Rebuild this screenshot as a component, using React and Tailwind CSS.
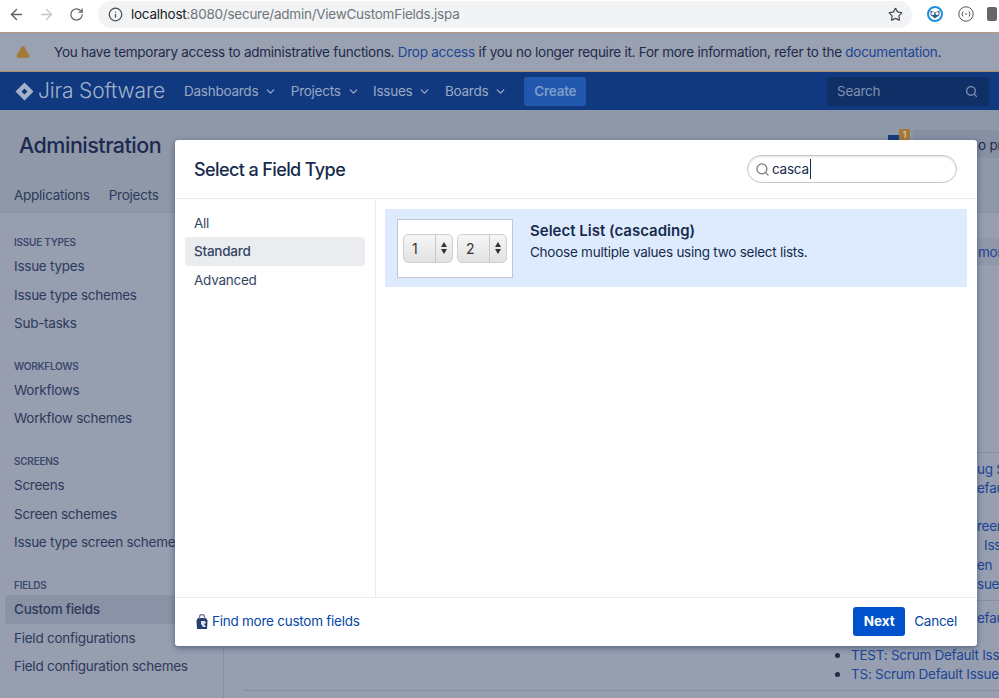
import React from "react";
import { ArrowLeft, ArrowRight, RotateCw, Info, Star, Search, ChevronDown, TriangleAlert } from "lucide-react";

const sidebar = [
  { title: "ISSUE TYPES", items: ["Issue types", "Issue type schemes", "Sub-tasks"] },
  { title: "WORKFLOWS", items: ["Workflows", "Workflow schemes"] },
  { title: "SCREENS", items: ["Screens", "Screen schemes", "Issue type screen schemes"] },
  { title: "FIELDS", items: ["Custom fields", "Field configurations", "Field configuration schemes"] },
];

const peekLinks = [
  { top: "top-[459px]", text: "ug S" },
  { top: "top-[478px]", text: "efau" },
  { top: "top-[516px]", text: "reen" },
  { top: "top-[535px]", text: "  Iss" },
  { top: "top-[555px]", text: "en" },
  { top: "top-[574px]", text: "sue" },
  { top: "top-[608px]", text: "efau" },
];

const NavItem = ({ label }) => (
  <div className="flex items-center gap-[6px] text-[#9aa8c4]">
    {label}
    <ChevronDown size={13} strokeWidth={2.5} />
  </div>
);

const FakeSelect = ({ value }) => (
  <div className="flex h-[29px] w-[50px] rounded-[5px] border border-[#cfcfcf] bg-gradient-to-b from-[#f6f6f6] to-[#e2e2e2] text-[#333]">
    <div className="flex-1 pl-[8px] text-[14px] leading-[27px]">{value}</div>
    <div className="flex w-[17px] flex-col items-center justify-center gap-[2px] border-l border-[#c8c8c8]">
      <div className="h-0 w-0 border-x-[3.5px] border-b-[5px] border-x-transparent border-b-[#333]"></div>
      <div className="h-0 w-0 border-x-[3.5px] border-t-[5px] border-x-transparent border-t-[#333]"></div>
    </div>
  </div>
);

export default function App() {
  return (
    <div className="relative h-[698px] w-[999px] overflow-hidden bg-[#969eb0] font-['Inter','Liberation_Sans',sans-serif] text-[13.5px] tracking-[-0.25px]">
      {/* browser bar */}
      <div className="flex h-[33px] items-center border-b border-[#b09a78] bg-white pb-[4px]">
        <ArrowLeft size={17} className="ml-[8px] text-[#5f6368]" />
        <ArrowRight size={17} className="ml-[13px] text-[#c4c6c9]" />
        <RotateCw size={15} className="ml-[14px] text-[#5f6368]" />
        <div className="ml-[14px] flex h-[27px] w-[814px] items-center rounded-full bg-[#f1f3f4] pl-[10px] pr-[9px]">
          <Info size={15} className="text-[#4a4d50]" />
          <span className="ml-[8px] text-[#202124]">localhost</span>
          <span className="text-[#70757a]">:8080/secure/admin/ViewCustomFields.jspa</span>
          <Star size={15} className="ml-auto text-[#4a4d50]" />
        </div>
        <svg width="18" height="18" viewBox="0 0 18 18" className="ml-[14px] shrink-0">
          <circle cx="9" cy="9" r="7" fill="none" stroke="#1a8fe0" strokeWidth="2" />
          <path d="M4.5 5.5 9 7.5l4.5-2V10L9 13.5 4.5 10Z" fill="#2d5f8a" />
          <circle cx="6.8" cy="8.5" r="1.6" fill="#fff" />
          <circle cx="11.2" cy="8.5" r="1.6" fill="#fff" />
        </svg>
        <svg width="18" height="18" viewBox="0 0 18 18" className="ml-[13px] shrink-0">
          <circle cx="9" cy="9" r="7.2" fill="none" stroke="#555" />
          <path d="M6 6.5 5 9l1 2.5M12 6.5 13 9l-1 2.5M8 9h2" fill="none" stroke="#555" />
        </svg>
        <div className="ml-[12px] h-[14px] w-[10px] shrink-0 rounded-[2px] bg-[#666]"></div>
      </div>

      {/* warning banner */}
      <div className="flex h-[39px] items-center whitespace-nowrap border-b border-[#a8906b] bg-[#9aa1b0] text-[#1f2b4d]">
        <TriangleAlert size={14} fill="#a5793a" stroke="#a5793a" className="ml-[16px] shrink-0" />
        <span className="ml-[24px]">
          You have temporary access to administrative functions. <span className="text-[#1c4596]">Drop access</span> if you no longer require it. For more information, refer to the <span className="text-[#1c4596]">documentation</span>.
        </span>
      </div>

      {/* jira nav */}
      <div className="flex h-[38px] items-center bg-[#10397f]">
        <svg width="19" height="19" viewBox="0 0 19 19" className="ml-[15px] shrink-0">
          <path d="M9.5 0.5 18.5 9.5 9.5 18.5 0.5 9.5Z" fill="#a3b1cb" />
          <path d="M9.5 6.5 12.5 9.5 9.5 12.5 6.5 9.5Z" fill="#10397f" />
        </svg>
        <span className="ml-[4px] w-[146px] shrink-0 whitespace-nowrap text-[21px] font-light tracking-[-0.15px] text-[#a3b1cb]">Jira Software</span>
        <div className="flex items-center gap-[13.5px]">
          <NavItem label="Dashboards" />
          <NavItem label="Projects" />
          <NavItem label="Issues" />
          <NavItem label="Boards" />
        </div>
        <div className="ml-[17px] flex h-[29px] w-[62px] items-center justify-center rounded-[3px] bg-[#2158ae] font-semibold text-[#7e9ccc]">Create</div>
        <div className="ml-auto mr-[10px] flex h-[29px] w-[162px] items-center justify-between rounded-[3px] bg-[#0f2f66] pl-[10px] pr-[11px] text-[#7f8fae]">
          Search
          <Search size={13} strokeWidth={2.5} />
        </div>
      </div>

      {/* page header behind the dialog */}
      <div className="h-[103px] border-b border-[#8a93a5] bg-[#8f98a9] pl-[19px] pt-[20px]">
        <div className="text-[21.5px] font-medium leading-[30px] tracking-[-0.5px] text-[#1c2a4f]">Administration</div>
        <div className="-ml-[5px] mt-[25px] flex gap-[19px] text-[#2d3a5a]">
          <span>Applications</span>
          <span>Projects</span>
        </div>
      </div>

      {/* sidebar behind the dialog */}
      <div className="flex h-[485px]">
        <div className="w-[224px] shrink-0 border-r border-[#858ea0] pl-[5px] pt-[20px]">
          {sidebar.map((group) => (
            <div key={group.title} className="mb-[19.4px]">
              <div className="pl-[9px] text-[10px] font-semibold leading-[19px] text-[#3c4a6b]">{group.title}</div>
              {group.items.map((item) => (
                <div
                  key={item}
                  className={`h-[28.5px] whitespace-nowrap rounded-[3px] pl-[9px] leading-[28px] text-[#2d3a5a] ${item === "Custom fields" ? "w-[190px] bg-[#8a92a5] font-medium" : ""}`}
                >
                  {item}
                </div>
              ))}
            </div>
          ))}
        </div>
        <div className="flex-1"></div>
      </div>

      {/* content peeking out to the right of the dialog */}
      <div className="absolute left-[888px] top-[135px] h-[8px] w-[14px] bg-[#173b80]"></div>
      <div className="absolute left-[899px] top-[129px] h-[11px] w-[11px] rounded-[1px] bg-[#a5793a] text-center text-[9px] leading-[11px] text-[#e8dcc8]">1</div>
      <div className="absolute left-[913px] top-[130px] h-[28px] w-[86px] whitespace-nowrap bg-[#878fa3] pl-[65px] pt-[5px] text-[#1f2b4d]">o pr</div>
      <div className="absolute left-[977px] top-[238px] h-[27px] w-[22px] overflow-hidden whitespace-nowrap bg-[#8f97a9] pl-[1px] pt-[4px] text-[#1c4596]">mor</div>
      <div className="absolute left-[977px] top-[452px] h-px w-[22px] bg-[#858ea0]"></div>
      <div className="absolute left-[977px] top-[600px] h-px w-[22px] bg-[#858ea0]"></div>
      {peekLinks.map((link) => (
        <div key={link.top} className={`absolute right-0 ${link.top} w-[22px] overflow-hidden whitespace-pre text-[#1c4596]`}>
          {link.text}
        </div>
      ))}
      <ul className="absolute left-[835px] top-[646px] w-[164px] overflow-hidden whitespace-nowrap leading-[19px] text-[#1c4596]">
        <li className="flex items-center gap-[11px]"><span className="h-[5px] w-[5px] shrink-0 rounded-full bg-[#1f2b4d]"></span>TEST: Scrum Default Issue</li>
        <li className="flex items-center gap-[11px]"><span className="h-[5px] w-[5px] shrink-0 rounded-full bg-[#1f2b4d]"></span>TS: Scrum Default Issue</li>
      </ul>
      <div className="absolute left-[243px] top-[690px] h-px w-[756px] bg-[#858ea0]"></div>

      {/* dialog */}
      <div className="absolute left-[175px] top-[140px] flex h-[506px] w-[802px] flex-col rounded-[3px] bg-white shadow-[0_2px_6px_rgba(9,30,66,0.45)]">
        <div className="flex h-[59px] shrink-0 items-center justify-between border-b border-[#ebecf0] pl-[19px] pr-[20px]">
          <h2 className="text-[18px] font-medium tracking-[-0.6px] text-[#172b4d]">Select a Field Type</h2>
          <div className="flex h-[28px] w-[210px] items-center rounded-full border border-[#c7c7c7] pl-[7px] shadow-[inset_0_1px_2px_rgba(0,0,0,0.12)]">
            <Search size={15} className="text-[#777]" />
            <span className="ml-[2px] border-r border-[#172b4d] pr-[1px] text-[#172b4d]">casca</span>
          </div>
        </div>
        <div className="flex min-h-0 flex-1">
          <div className="w-[201px] shrink-0 border-r border-[#ebecf0] px-[10px] pt-[9px] text-[#344563]">
            <div className="h-[29px] pl-[9px] leading-[30px]">All</div>
            <div className="h-[29px] rounded-[3px] bg-[#ebecf0] pl-[9px] font-medium leading-[29px]">Standard</div>
            <div className="h-[29px] pl-[9px] leading-[29px]">Advanced</div>
          </div>
          <div className="flex-1 pl-[9px] pr-[10px] pt-[10px]">
            <div className="flex h-[78px] items-center bg-[#deebff] pl-[12px]">
              <div className="flex h-[59px] w-[116px] items-center justify-center gap-[4px] border border-[#c1c7d0] bg-white">
                <FakeSelect value="1" />
                <FakeSelect value="2" />
              </div>
              <div className="mb-[14px] ml-[17px] text-[#172b4d]">
                <div className="text-[15px] font-semibold leading-[22px] tracking-normal">Select List (cascading)</div>
                <div className="leading-[20px]">Choose multiple values using two select lists.</div>
              </div>
            </div>
          </div>
        </div>
        <div className="flex h-[49px] shrink-0 items-center border-t border-[#ebecf0] pb-[1px] pl-[20px] pr-[20px]">
          <svg width="14" height="16" viewBox="0 0 14 16">
            <path d="M1.5 6.5 3 4h8l1.5 2.5-.5 8.5H2Z" fill="#253e6e" />
            <path d="M4.5 5V3a2.5 2.5 0 0 1 5 0v2" fill="none" stroke="#6f7f9f" strokeWidth="1.4" />
            <path d="M6 7h4l1 2-2 1 2 3H8L6 10Z" fill="#dfe5ef" />
          </svg>
          <span className="ml-[3px] text-[#0747a6]">Find more custom fields</span>
          <div className="ml-auto flex h-[29px] w-[52px] items-center justify-center rounded-[3px] bg-[#0052cc] font-bold tracking-normal text-white">Next</div>
          <span className="ml-[9px] text-[#0747a6]">Cancel</span>
        </div>
      </div>
    </div>
  );
}
